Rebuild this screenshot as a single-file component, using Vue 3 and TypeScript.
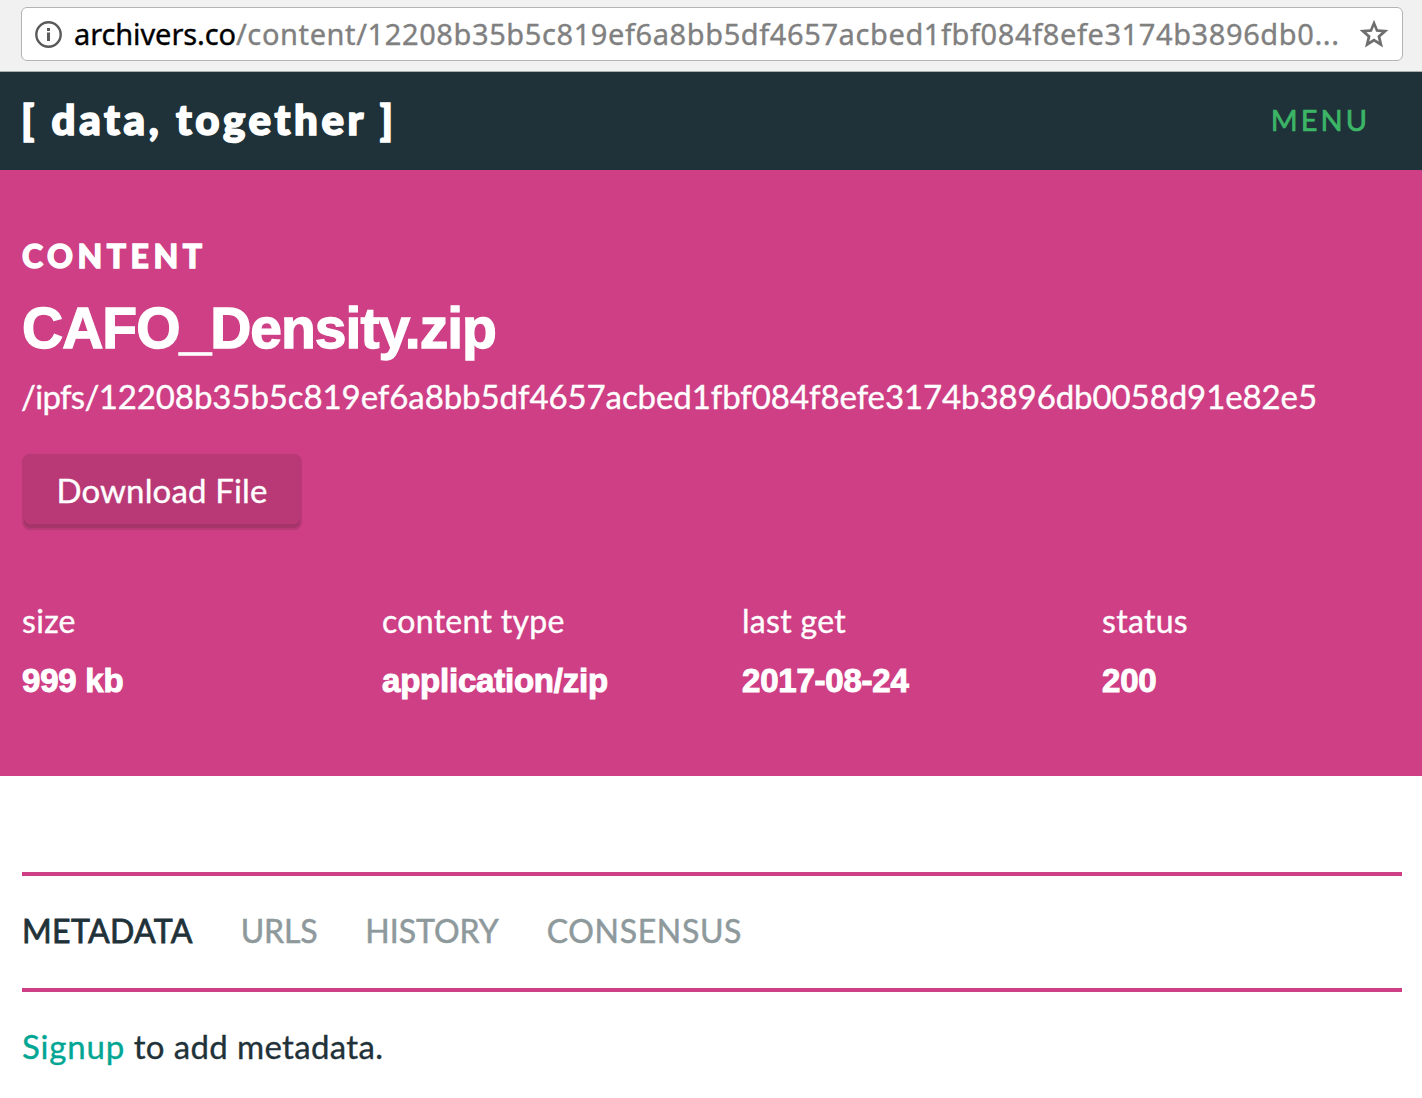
<script setup lang="ts">
interface Stat {
  label: string
  value: string
}

interface Tab {
  name: string
  active: boolean
}

const hash = '12208b35b5c819ef6a8bb5df4657acbed1fbf084f8efe3174b3896db0058d91e82e5'

const stats: Stat[] = [
  { label: 'size', value: '999 kb' },
  { label: 'content type', value: 'application/zip' },
  { label: 'last get', value: '2017-08-24' },
  { label: 'status', value: '200' },
]

const tabs: Tab[] = [
  { name: 'metadata', active: true },
  { name: 'urls', active: false },
  { name: 'history', active: false },
  { name: 'consensus', active: false },
]
</script>

<template>
  <div class="page">
    <div class="toolbar">
      <div class="address">
        <svg class="info" width="28" height="28" viewBox="0 0 28 28">
          <circle cx="14.5" cy="14.5" r="12.2" fill="none" stroke="#5a5a5a" stroke-width="2.4" />
          <rect x="13" y="8" width="3" height="3" fill="#5a5a5a" />
          <rect x="13" y="12.5" width="3" height="8.5" fill="#5a5a5a" />
        </svg>
        <span class="url"><span class="host">archivers.co</span>/content/12208b35b5c819ef6a8bb5df4657acbed1fbf084f8efe3174b3896db0...</span>
        <svg class="star" width="30" height="30" viewBox="0 0 30 30">
          <path
            fill="#6e6e6e" fill-rule="evenodd"
            d="M15 0.8 L18.9 10.3 L29.4 11.1 L21.5 17.9 L24 28.4 L15 22.8 L6 28.4 L8.5 17.9 L0.6 11.1 L11.1 10.3 Z M15 7.5 L12.9 12.8 L7.3 13.2 L11.6 16.9 L10.2 22.6 L15 19.6 L19.8 22.6 L18.4 16.9 L22.7 13.2 L17.1 12.8 Z"
          />
        </svg>
      </div>
    </div>

    <header class="header">
      <a class="logo">[ data, together ]</a>
      <a class="menu">MENU</a>
    </header>

    <section class="hero">
      <div class="kicker">CONTENT</div>
      <h1 class="title">CAFO_Density.zip</h1>
      <div class="path"><span class="scheme">/ipfs/</span>{{ hash }}</div>
      <button class="download">Download File</button>
      <div class="stats">
        <div v-for="s in stats" :key="s.label" class="stat">
          <div class="label">{{ s.label }}</div>
          <div class="value">{{ s.value }}</div>
        </div>
      </div>
    </section>

    <main class="main">
      <nav class="tabs">
        <a v-for="t in tabs" :key="t.name" class="tab" :class="[t.name, { active: t.active }]">{{ t.name.toUpperCase() }}</a>
      </nav>
      <p class="note"><a class="signup">Signup</a> to add metadata.</p>
    </main>
  </div>
</template>

<style>
body {
  margin: 0;
  background: #fff;
}
</style>

<style scoped>
.page {
  height: 1098px;
  overflow: hidden;
  background: #fff;
  color: #1f3239;
  font-family: Lato, "Open Sans", sans-serif;
  white-space: nowrap;
  -webkit-text-stroke-width: 0.35px;
}

.toolbar {
  box-sizing: border-box;
  height: 72px;
  padding: 7px 19px 0 21px;
  background: #f1f1f1;
  border-bottom: 1px solid #aab0b0;
}

.address {
  box-sizing: border-box;
  display: flex;
  align-items: center;
  height: 54px;
  padding: 0 13px 0 12px;
  background: #fff;
  border: 1px solid #b4b4b4;
  border-radius: 6px;
}

.info {
  flex: none;
  margin-right: 12px;
}

.url {
  flex: 1;
  color: #808080;
  font-family: "Noto Sans", "Open Sans", sans-serif;
  font-size: 29px;
  line-height: 54px;
  letter-spacing: 0.6px;
}

.host {
  color: #000;
  letter-spacing: -0.1px;
}

.star {
  flex: none;
}

.header {
  display: flex;
  justify-content: space-between;
  height: 98px;
  padding: 0 52px 0 21px;
  background: #1f3239;
  line-height: 96px;
}

.logo {
  color: #fff;
  font-size: 42px;
  font-weight: 900;
  line-height: 94px;
  letter-spacing: 3.65px;
  -webkit-text-stroke-width: 1.7px;
}

.menu {
  color: #3cb567;
  font-size: 29px;
  letter-spacing: 3px;
  -webkit-text-stroke-width: 0.7px;
}

.hero {
  box-sizing: border-box;
  height: 606px;
  padding: 66px 0 0 22px;
  background: #ce3f85;
  color: #fff;
}

.kicker {
  font-size: 32px;
  font-weight: 900;
  line-height: 40px;
  letter-spacing: 4.5px;
  -webkit-text-stroke-width: 1.3px;
}

.title {
  margin: 20px 0 16px;
  font-family: "Liberation Sans", Arial, sans-serif;
  font-size: 57px;
  font-weight: 700;
  line-height: 64px;
  letter-spacing: -1px;
  -webkit-text-stroke-width: 1.3px;
}

.path {
  margin-left: -1px;
  font-size: 33px;
  line-height: 40px;
  letter-spacing: -0.09px;
}

.scheme {
  letter-spacing: -0.7px;
}

.download {
  box-sizing: border-box;
  display: block;
  width: 280px;
  height: 76px;
  margin: 38px 0 0;
  padding: 0 0 4px;
  background: #b83976;
  border: 2px solid #b83976;
  border-radius: 8px;
  box-shadow: inset 0 -4px 0 #a5346b;
  color: #fff;
  font-family: inherit;
  font-size: 33px;
  line-height: 66px;
  letter-spacing: 0.15px;
}

.stats {
  display: grid;
  grid-template-columns: repeat(4, 360px);
  margin-top: 71px;
}

.label {
  font-size: 32px;
  line-height: 40px;
  letter-spacing: 0.3px;
}

.value {
  margin-top: 20px;
  font-family: "Liberation Sans", Arial, sans-serif;
  font-size: 33px;
  font-weight: 700;
  line-height: 40px;
  letter-spacing: -0.22px;
  -webkit-text-stroke-width: 1px;
}

.main {
  padding: 96px 20px 0 22px;
}

.tabs {
  box-sizing: border-box;
  display: flex;
  gap: 48px;
  height: 120px;
  border-top: 4px solid #ce3f85;
  border-bottom: 4px solid #ce3f85;
  font-size: 32px;
  line-height: 110px;
  -webkit-text-stroke-width: 0.5px;
}

.tab {
  color: #8e999c;
}

.tab.active {
  color: #1f3239;
  letter-spacing: 0.35px;
  -webkit-text-stroke-width: 0.8px;
}

.tab.urls {
  letter-spacing: -0.2px;
}

.tab.consensus {
  letter-spacing: 0.65px;
}

.note {
  margin: 34px 0 0;
  font-size: 33px;
  line-height: 40px;
  letter-spacing: 0.35px;
}

.signup {
  color: #00a693;
  letter-spacing: 0.8px;
}
</style>
